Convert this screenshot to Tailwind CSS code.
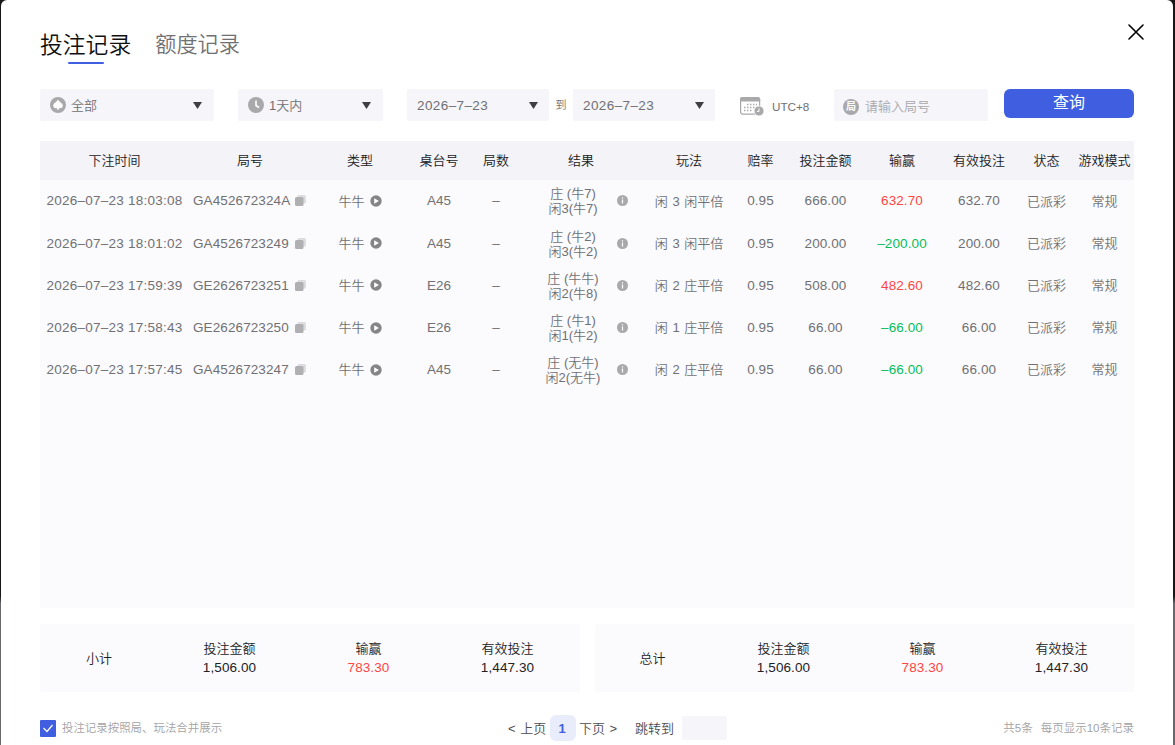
<!DOCTYPE html>
<html lang="zh-CN">
<head>
  <meta charset="UTF-8" />
  <meta name="viewport" content="width=device-width, initial-scale=1.0"/>
  <title>投注记录</title>
  <script src="https://cdn.jsdelivr.net/npm/@tailwindcss/browser@4"></script>
</head>
<body class="h-[745px] overflow-hidden bg-linear-to-b from-[#17171a] from-80% to-[#66686c] to-81% pl-px pr-[2px] font-['Liberation_Sans','Noto_Sans_CJK_SC',sans-serif] text-[13px] font-[350] text-[#707073]">

  <div class="relative h-full rounded-t-md bg-white px-[39px] pt-[30px]">

    <!-- Fechar -->
    <button class="absolute right-[29px] top-6 text-black" aria-label="关闭">
      <svg class="h-4 w-4" viewBox="0 0 16 16" fill="none" stroke="currentColor" stroke-width="1.6" stroke-linecap="round"><path d="M1 1l14 14M15 1L1 15" /></svg>
    </button>

    <!-- Abas -->
    <div class="flex h-[34px] items-start gap-6">
      <div class="flex flex-col items-center text-[22.8px] leading-[30px] text-[#111]">
        投注记录
        <span class="mt-[2px] h-[2px] w-9 rounded-full bg-[#3f5fe0]"></span>
      </div>
      <div class="text-[21.2px] leading-[30px]">额度记录</div>
    </div>

    <!-- Filtros -->
    <div class="mt-[25px] flex h-8 items-center">
      <div class="flex h-8 w-[174px] items-center rounded-xs bg-[#f5f5fa] pl-2.5 pr-3">
        <svg class="h-4 w-4" viewBox="0 0 16 16"><circle cx="8" cy="8" r="8" fill="#a9a9ac"/><path d="M8 2.800C6.600 5 3.200 6.300 3.200 8.800c0 2.200 2.400 2.900 3.800 1.900L6.600 12.600h2.800L9 10.700c1.400 1 3.800.3 3.800-1.900C12.800 6.300 9.400 5 8 2.800z" fill="#fff"/></svg>
        <span class="ml-[5px] pt-px">全部</span>
        <svg class="ml-auto h-[7px] w-[9px]" viewBox="0 0 9 7"><path d="M0 0h9L4.500 7z" fill="#3f3f43"/></svg>
      </div>
      <div class="ml-6 flex h-8 w-[145px] items-center rounded-xs bg-[#f5f5fa] pl-2.5 pr-3">
        <svg class="h-4 w-4" viewBox="0 0 16 16"><circle cx="8" cy="8" r="8" fill="#a9a9ac"/><path d="M8 3.500V8.500L11 10.500" fill="none" stroke="#fff" stroke-width="1.600"/></svg>
        <span class="ml-[5px] pt-px">1天内</span>
        <svg class="ml-auto h-[7px] w-[9px]" viewBox="0 0 9 7"><path d="M0 0h9L4.500 7z" fill="#3f3f43"/></svg>
      </div>
      <div class="ml-6 flex h-8 w-[142px] items-center rounded-xs bg-[#f5f5fa] pl-2.5 pr-[11px]">
        <span class="pt-0.5 text-[13.5px] tracking-[0.4px]">2026–7–23</span>
        <svg class="ml-auto h-[7px] w-[9px]" viewBox="0 0 9 7"><path d="M0 0h9L4.500 7z" fill="#3f3f43"/></svg>
      </div>
      <span class="w-6 pt-px text-center text-[11px]">到</span>
      <div class="flex h-8 w-[142px] items-center rounded-xs bg-[#f5f5fa] pl-2.5 pr-[11px]">
        <span class="pt-0.5 text-[13.5px] tracking-[0.4px]">2026–7–23</span>
        <svg class="ml-auto h-[7px] w-[9px]" viewBox="0 0 9 7"><path d="M0 0h9L4.500 7z" fill="#3f3f43"/></svg>
      </div>
      <svg class="ml-[25px] mt-0.5 h-[19px] w-6" viewBox="0 0 24 19">
        <rect x=".6" y=".6" width="19" height="16.500" rx="2" fill="#fff" stroke="#a9a9ac" stroke-width="1.200"/>
        <path d="M0 4.500V2.500A2 2 0 0 1 2 .300h16.200a2 2 0 0 1 2 2.200v2z" fill="#a9a9ac"/>
        <path d="M7 7.500h10M4 10.500h13M4 13.500h9" stroke="#a9a9ac" stroke-width="1.400" stroke-dasharray="1.400 1.600"/>
        <circle cx="19" cy="14" r="5" fill="#a9a9ac" stroke="#fff" stroke-width=".8"/>
        <path d="M19 11.500V14.500h-2" fill="none" stroke="#fff"/>
      </svg>
      <span class="ml-2 w-[62px] pt-[3px] text-[11.7px]">UTC+8</span>
      <div class="flex h-8 w-[154px] items-center rounded-xs bg-[#f5f5fa] pl-[9px] text-[#a9a9ac]">
        <span class="mt-[3px] flex h-4 w-4 items-center justify-center rounded-full bg-[#a9a9ac] text-[10px] leading-none font-bold text-white">局</span>
        <span class="ml-1.5 pt-[3px]">请输入局号</span>
      </div>
      <button class="ml-4 h-[29px] w-[130px] self-start rounded-md bg-[#3f5fe0] pb-0.5 text-[16px] leading-[25px] font-normal text-white">查询</button>
    </div>

    <!-- Tabela -->
    <div class="mt-5 h-[467px] bg-[#fbfbfe]">
      <div class="grid h-[39px] grid-cols-[149px_122px_98px_60px_54px_116px_100px_43px_87px_66px_88px_47px_64px] items-center bg-[#f3f3f8] text-center whitespace-nowrap text-[#19191c]">
        <div>下注时间</div><div>局号</div><div>类型</div><div>桌台号</div><div>局数</div><div>结果</div><div>玩法</div><div>赔率</div><div>投注金额</div><div>输赢</div><div>有效投注</div><div>状态</div><div class="pl-[5px]">游戏模式</div>
      </div>
      <div id="rows" class="pt-[0.4px]"></div>
    </div>

    <!-- Totais -->
    <div class="mt-4 flex h-[68px] gap-[15px] text-[#222225]">
      <div class="grid w-[540px] grid-cols-[118px_143px_135px_143px] items-center rounded-xs bg-[#fbfbfe] text-center leading-[19px]">
        <div>小计</div>
        <div><p>投注金额</p><p class="text-[13.5px] tracking-[0.1px]">1,506.00</p></div>
        <div><p>输赢</p><p class="text-[13.5px] tracking-[0.1px] text-[#ff4642]">783.30</p></div>
        <div><p>有效投注</p><p class="text-[13.5px] tracking-[0.1px]">1,447.30</p></div>
      </div>
      <div class="grid w-[539px] grid-cols-[117px_143px_135px_143px] items-center rounded-xs bg-[#fbfbfe] text-center leading-[19px]">
        <div class="-ml-0.5">总计</div>
        <div><p>投注金额</p><p class="text-[13.5px] tracking-[0.1px]">1,506.00</p></div>
        <div><p>输赢</p><p class="text-[13.5px] tracking-[0.1px] text-[#ff4642]">783.30</p></div>
        <div><p>有效投注</p><p class="text-[13.5px] tracking-[0.1px]">1,447.30</p></div>
      </div>
    </div>

    <!-- Rodapé -->
    <div class="mt-[23px] grid h-[26px] grid-cols-[468px_1fr_auto] items-center">
      <div class="flex items-center gap-1.5 text-[11.45px] text-[#a3a3a7]">
        <svg class="mt-px h-[17px] w-4" viewBox="0 0 16 17"><rect width="16" height="17" rx="1" fill="#3f5fe0"/><path d="M3.500 8l3.500 3.500 5.500-6.500" fill="none" stroke="#fff" stroke-width="1.200"/></svg>
        <span class="pt-0.5">投注记录按照局、玩法合并展示</span>
      </div>
      <div class="flex items-center text-[#4d4d52]">
        <span class="w-[42px] pt-0.5 [word-spacing:1px]">&lt; 上页</span>
        <span class="flex h-[26px] w-[26px] items-center justify-center rounded-md bg-[#e9ecfb] pr-0.5 pt-0.5 font-bold text-[#3f5fe0]">1</span>
        <span class="ml-[3px] w-14 pt-0.5 [word-spacing:1px]">下页 &gt;</span>
        <span class="pt-0.5">跳转到</span>
        <span class="ml-2 h-6 w-[45px] rounded-xs bg-[#f5f5fa]"></span>
      </div>
      <div class="flex gap-2 pt-0.5 text-[11.5px] text-[#a3a3a7]"><span>共5条</span><span>每页显示10条记录</span></div>
    </div>
  </div>

  <script>
    const bets = [
      ["2026–07–23 18:03:08", "GA452672324A", "A45", "庄 (牛7)", "闲3(牛7)", "闲 3 闲平倍", "666.00", "632.70", "632.70"],
      ["2026–07–23 18:01:02", "GA4526723249", "A45", "庄 (牛2)", "闲3(牛2)", "闲 3 闲平倍", "200.00", "–200.00", "200.00"],
      ["2026–07–23 17:59:39", "GE2626723251", "E26", "庄 (牛牛)", "闲2(牛8)", "闲 2 庄平倍", "508.00", "482.60", "482.60"],
      ["2026–07–23 17:58:43", "GE2626723250", "E26", "庄 (牛1)", "闲1(牛2)", "闲 1 庄平倍", "66.00", "–66.00", "66.00"],
      ["2026–07–23 17:57:45", "GA4526723247", "A45", "庄 (无牛)", "闲2(无牛)", "闲 2 庄平倍", "66.00", "–66.00", "66.00"],
    ];

    document.getElementById("rows").innerHTML = bets.map(b => `
      <div class="grid h-[42.2px] grid-cols-[149px_122px_98px_60px_54px_116px_100px_43px_87px_66px_88px_47px_64px] items-center text-center text-[13.5px] whitespace-nowrap">
        <div class="tracking-[0.25px]">${b[0]}</div>
        <div class="flex items-center pl-1 tracking-[0.1px]">
          <span class="w-[102px] text-left">${b[1]}</span>
          <svg class="-mt-px h-[11px] w-[11px]" viewBox="0 0 11 11"><rect x="2.500" width="8.500" height="8.500" rx="1.500" fill="#dcdcdf"/><rect y="2" width="8.500" height="9" rx="1.500" fill="#b0b0b3"/></svg>
        </div>
        <div class="flex items-center justify-center gap-[5px] text-[13px]">牛牛
          <svg class="-mt-px h-3 w-3" viewBox="0 0 12 12"><circle cx="6" cy="6" r="5.700" fill="#858588"/><path d="M4.200 3.200v5.600L8.900 6z" fill="#fff"/></svg>
        </div>
        <div>${b[2]}</div>
        <div>–</div>
        <div class="flex items-center pl-1.5 text-[13px]">
          <div class="w-[88px] leading-[15px]">${b[3]}<br />${b[4]}</div>
          <svg class="-mt-px h-[11px] w-[11px]" viewBox="0 0 11 11"><circle cx="5.500" cy="5.500" r="5.500" fill="#a9a9ac"/><path d="M5.500 2.300v1.300M5.500 4.600v4" stroke="#fff" stroke-width="1.200"/></svg>
        </div>
        <div class="text-[13px] [word-spacing:1px]">${b[5]}</div>
        <div>0.95</div>
        <div class="tracking-[0.1px]">${b[6]}</div>
        <div class="tracking-[0.1px] ${b[7][0] === "–" ? "text-[#06bd5a]" : "text-[#ff4642]"}">${b[7]}</div>
        <div class="tracking-[0.1px]">${b[8]}</div>
        <div class="text-[13px]">已派彩</div>
        <div class="pl-[5px] text-[13px]">常规</div>
      </div>`).join("");
  </script>

</body>
</html>
